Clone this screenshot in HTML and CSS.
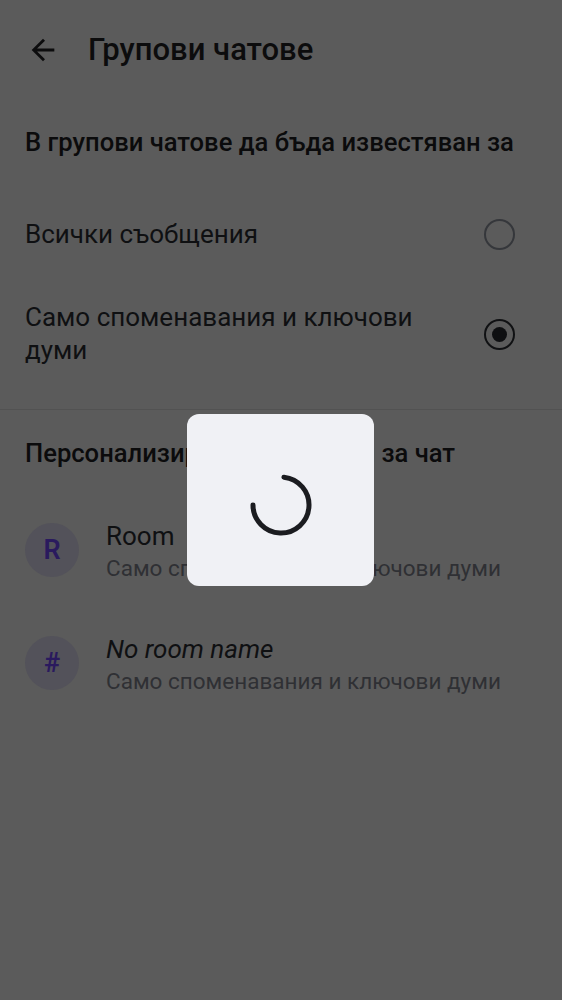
FILE: index.html
```html
<!DOCTYPE html>
<html lang="bg">
<head>
<meta charset="utf-8">
<link rel="stylesheet" href="styles.css">
</head>
<body>
<div class="screen">
  <header class="topbar">
    <svg class="back" viewBox="0 0 24 24" width="34" height="34"><path d="M20 11H7.83l5.59-5.59L12 4l-8 8 8 8 1.41-1.41L7.83 13H20v-2z" fill="#0c0c0d"/></svg>
    <h1 class="title">Групови чатове</h1>
  </header>

  <h2 class="section-title first">В групови чатове да бъда известяван за</h2>
  <div class="option">
    <span class="option-label">Всички съобщения</span>
    <span class="radio"></span>
  </div>
  <div class="option">
    <span class="option-label">Само споменавания и ключови думи</span>
    <span class="radio checked"></span>
  </div>
  <div class="divider"></div>

  <h2 class="section-title second">Персонализирани настройки за чат</h2>
  <div class="room">
    <div class="avatar">R</div>
    <div class="room-text">
      <div class="room-name">Room</div>
      <div class="room-sub">Само споменавания и ключови думи</div>
    </div>
  </div>
  <div class="room">
    <div class="avatar">#</div>
    <div class="room-text">
      <div class="room-name italic">No room name</div>
      <div class="room-sub">Само споменавания и ключови думи</div>
    </div>
  </div>

  <div class="dialog">
    <svg class="spinner" viewBox="0 0 70 70" width="70" height="70"><path d="M37.9 7.15 A 28 28 0 1 1 7 35" fill="none" stroke="#1b1c20" stroke-width="5" stroke-linecap="round"/></svg>
  </div>
</div>
</body>
</html>
```
FILE: styles.css
```css
* { box-sizing: border-box; margin: 0; padding: 0; }
html, body { width: 562px; height: 1000px; background: #5b5b5b; }
body { font-family: Roboto, "Noto Sans", "DejaVu Sans", sans-serif; color: #0e0f11; overflow: hidden; }
.screen { position: relative; width: 562px; height: 1000px; }

.topbar { height: 100px; display: flex; align-items: center; padding-left: 26px; }
.back { display: block; flex: none; }
.title { font-size: 31px; font-weight: 500; margin-left: 28px; line-height: 38px; color: #0c0c0d; }

.section-title { font-size: 25.6px; font-weight: 500; line-height: 32px; padding: 0 25px; color: #0b0b0c; white-space: nowrap; }
.section-title.first { margin-top: 26px; margin-bottom: 35px; }
.section-title.second { margin-top: 27px; margin-bottom: 24.5px; }

.option { display: flex; align-items: center; justify-content: space-between; padding: 25px 47px 25px 25px; }
.option-label { font-size: 26px; line-height: 33px; max-width: 420px; color: #0f1012; }
.radio { flex: none; width: 31px; height: 31px; border-radius: 50%; border: 2.5px solid #35373b; position: relative; }
.radio.checked { border-color: #101113; }
.radio.checked::after { content: ""; position: absolute; left: 50%; top: 50%; width: 15px; height: 15px; margin: -7.5px 0 0 -7.5px; border-radius: 50%; background: #0e0f11; }

.divider { height: 1px; background: #525252; margin-top: 17px; }

.room { display: flex; align-items: center; padding: 22.5px 25px; }
.avatar { flex: none; width: 54px; height: 54px; border-radius: 50%; background: #53525a; color: #2a1a5e; font-size: 27px; font-weight: 600; display: flex; align-items: center; justify-content: center; margin-right: 27px; }
.room-text { padding-top: 4px; }
.room-name { font-size: 26px; line-height: 32px; color: #0f1012; }
.room-name.italic { font-style: italic; }
.room-sub { font-size: 22.5px; line-height: 32px; color: #2f3034; }

.dialog { position: absolute; left: 187px; top: 414px; width: 187px; height: 172px; border-radius: 12px; background: #f0f1f5; display: flex; align-items: center; justify-content: center; }
.spinner { display: block; margin-top: 9px; }
```
